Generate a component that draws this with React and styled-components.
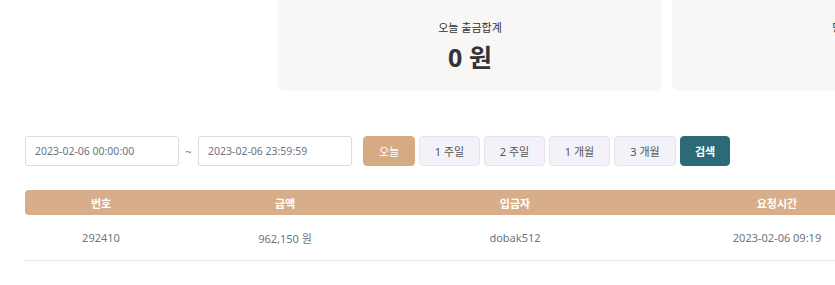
import React from 'react'
import styled, { createGlobalStyle } from 'styled-components'

const Global = createGlobalStyle`
  html, body {
    margin: 0;
    padding: 0;
    background: #fff;
    overflow: hidden;
  }
  body {
    font-family: "Noto Sans", "Noto Sans CJK KR", sans-serif;
  }
`

const Page = styled.div`
  width: 835px;
  height: 285px;
  overflow: hidden;
  padding-left: 25px;
  box-sizing: border-box;
`

const Summary = styled.div`
  display: flex;
  gap: 10px;
  margin-left: 253px;
  width: 1000px;
`

const Card = styled.div`
  flex: 0 0 384px;
  height: 91px;
  background: #f8f7f6;
  border-radius: 0 0 8px 8px;
  display: flex;
  flex-direction: column;
  align-items: center;
  padding-top: 20px;
  box-sizing: border-box;
`

const CardTitle = styled.div`
  font-size: 11px;
  color: #333;
  line-height: 16px;
`

const CardValue = styled.div`
  font-size: 25px;
  font-weight: 700;
  color: #333;
  line-height: 34px;
  margin-top: 4px;
`

const Filters = styled.div`
  display: flex;
  align-items: center;
  margin-top: 45px;
  height: 30px;
`

const DateInput = styled.input`
  width: 154px;
  height: 30px;
  box-sizing: border-box;
  border: 1px solid #dcdcdc;
  border-radius: 3px;
  padding: 0 9px;
  font-family: "Noto Sans", sans-serif;
  font-size: 10.5px;
  color: #6c757d;
  outline: none;
`

const Tilde = styled.span`
  width: 19px;
  text-align: center;
  font-size: 11px;
  color: #777;
`

const Buttons = styled.div`
  display: flex;
  gap: 4px;
  margin-left: 11px;
`

const RangeButton = styled.button`
  height: 30px;
  width: ${p => p.$w}px;
  box-sizing: border-box;
  border-radius: 4px;
  font-family: "Noto Sans", "Noto Sans CJK KR", sans-serif;
  font-size: 11px;
  cursor: pointer;
  padding: 0;
  border: 1px solid ${p => (p.$variant === 'active' ? '#d6ab84' : p.$variant === 'search' ? '#2a6b77' : '#e4e4ee')};
  background: ${p => (p.$variant === 'active' ? '#d6ab84' : p.$variant === 'search' ? '#2a6b77' : '#f2f2f8')};
  color: ${p => (p.$variant === 'default' ? '#555' : '#fff')};
  font-weight: ${p => (p.$variant === 'search' ? 700 : 400)};
`

const Table = styled.table`
  margin-top: 24px;
  width: 892px;
  border-collapse: collapse;
  table-layout: fixed;
`

const Th = styled.th`
  background: #d7ae89;
  color: #fff;
  font-size: 11px;
  font-weight: 700;
  height: 25px;
  padding: 0;
  font-family: "Noto Sans CJK KR", "Noto Sans", sans-serif;
  &:first-child {
    border-radius: 4px 0 0 4px;
  }
`

const Td = styled.td`
  height: 45px;
  padding: 0;
  text-align: center;
  font-size: 11px;
  color: #6c757d;
  border-bottom: 1px solid #e6e6e6;
`

const ranges = [
  { label: '오늘', w: 52, variant: 'active' },
  { label: '1 주일', w: 61, variant: 'default' },
  { label: '2 주일', w: 61, variant: 'default' },
  { label: '1 개월', w: 61, variant: 'default' },
  { label: '3 개월', w: 62, variant: 'default' },
  { label: '검색', w: 50, variant: 'search' },
]

export default function App() {
  return (
    <Page>
      <Global />
      <Summary>
        <Card>
          <CardTitle>오늘 출금합계</CardTitle>
          <CardValue>0 원</CardValue>
        </Card>
        <Card>
          <CardTitle>당일 입금합계</CardTitle>
          <CardValue>0 원</CardValue>
        </Card>
      </Summary>

      <Filters>
        <DateInput defaultValue="2023-02-06 00:00:00" />
        <Tilde>~</Tilde>
        <DateInput defaultValue="2023-02-06 23:59:59" />
        <Buttons>
          {ranges.map(r => (
            <RangeButton key={r.label} $w={r.w} $variant={r.variant}>
              {r.label}
            </RangeButton>
          ))}
        </Buttons>
      </Filters>

      <Table>
        <colgroup>
          <col style={{ width: 152 }} />
          <col style={{ width: 216 }} />
          <col style={{ width: 244 }} />
          <col style={{ width: 280 }} />
        </colgroup>
        <thead>
          <tr>
            <Th>번호</Th>
            <Th>금액</Th>
            <Th>입금자</Th>
            <Th>요청시간</Th>
          </tr>
        </thead>
        <tbody>
          <tr>
            <Td>292410</Td>
            <Td>962,150 원</Td>
            <Td>dobak512</Td>
            <Td>2023-02-06 09:19</Td>
          </tr>
        </tbody>
      </Table>
    </Page>
  )
}
